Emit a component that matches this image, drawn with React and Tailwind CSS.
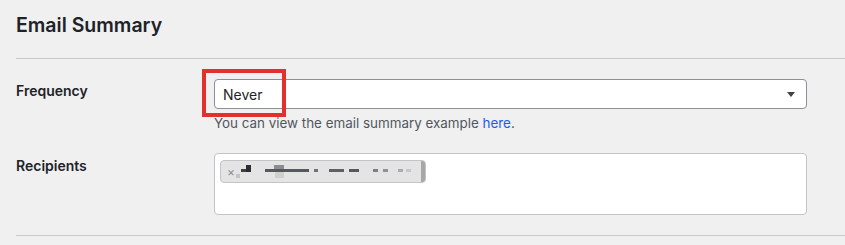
import { useState } from 'react';

// blurred recipient e-mail, drawn as the pixel mosaic seen in the screenshot
function BlurredEmail() {
  return (
    <svg width="180" height="14" viewBox="0 0 180 14" className="block">
      <rect x="0" y="9" width="4" height="4" fill="#c4c4c4" />
      <rect x="5" y="4" width="10" height="3" fill="#3c4046" />
      <rect x="10" y="0" width="5" height="7" fill="#2a2e33" />
      <rect x="29" y="4" width="44" height="3" fill="#55595e" />
      <rect x="38" y="0" width="10" height="4" fill="#8a8d91" />
      <rect x="39" y="7" width="9" height="6" fill="#cfcfd0" />
      <rect x="78" y="4" width="4" height="3" fill="#6e7176" />
      <rect x="93" y="4" width="15" height="3" fill="#5d6065" />
      <rect x="113" y="4" width="10" height="3" fill="#55595e" />
      <rect x="137" y="4" width="5" height="3" fill="#7b7e82" />
      <rect x="147" y="4" width="5" height="3" fill="#8d9094" />
      <rect x="162" y="4" width="5" height="3" fill="#a9abae" />
      <rect x="170" y="4" width="5" height="3" fill="#c6c7c9" />
    </svg>
  );
}

export default function App() {
  const [frequency] = useState('Never');

  return (
    <div className="min-h-screen bg-[#f0f0f1] pl-4 text-[#1d2327] font-['Inter','Liberation_Sans',sans-serif]">
      <h2 className="pt-[11px] text-[19.5px] leading-[28px] font-semibold">Email Summary</h2>

      <div className="mt-[19px] border-t border-[#c8c8ca]">
        {/* Frequency */}
        <div className="flex pt-5">
          <div className="w-[198px] shrink-0 pt-[2px] text-[14px] leading-[20px] font-semibold">
            Frequency
          </div>
          <div>
            <div className="relative w-[593px]">
              <div className="flex h-[30px] items-center justify-between rounded-[4px] border border-[#8c8f94] bg-white pl-2 pr-[11px] text-[14px]">
                <span>{frequency}</span>
                <svg width="8" height="5" viewBox="0 0 8 5">
                  <path d="M0 0h8L4 5z" fill="#3c434a" />
                </svg>
              </div>
              <div className="pointer-events-none absolute -left-3 -top-[10px] h-[48px] w-[84px] border-4 border-[#e2302f]" />
            </div>
            <p className="mt-1 text-[13.4px] leading-[20px] text-[#50575e]">
              You can view the email summary example <a className="text-[#1a5cf5]">here</a>.
            </p>
          </div>
        </div>

        {/* Recipients */}
        <div className="flex pt-5 pb-5">
          <div className="w-[198px] shrink-0 pt-[3px] text-[14px] leading-[20px] font-semibold">
            Recipients
          </div>
          <div className="h-[62px] w-[593px] rounded-[4px] border border-[#c3c4c7] bg-white pl-[5px] pt-[6px]">
            <div className="flex h-[23px] w-[206px] items-center overflow-hidden rounded-[4px] border border-[#c3c4c7] bg-[#e4e4e4]">
              <span className="ml-[6px] mr-[1px] text-[12px] leading-none text-[#8c8f94]">×</span>
              <BlurredEmail />
              <div className="ml-auto h-full w-[4px] bg-[#a7a7a7]" />
            </div>
          </div>
        </div>
      </div>

      <div className="border-t border-[#c8c8ca]" />
    </div>
  );
}
